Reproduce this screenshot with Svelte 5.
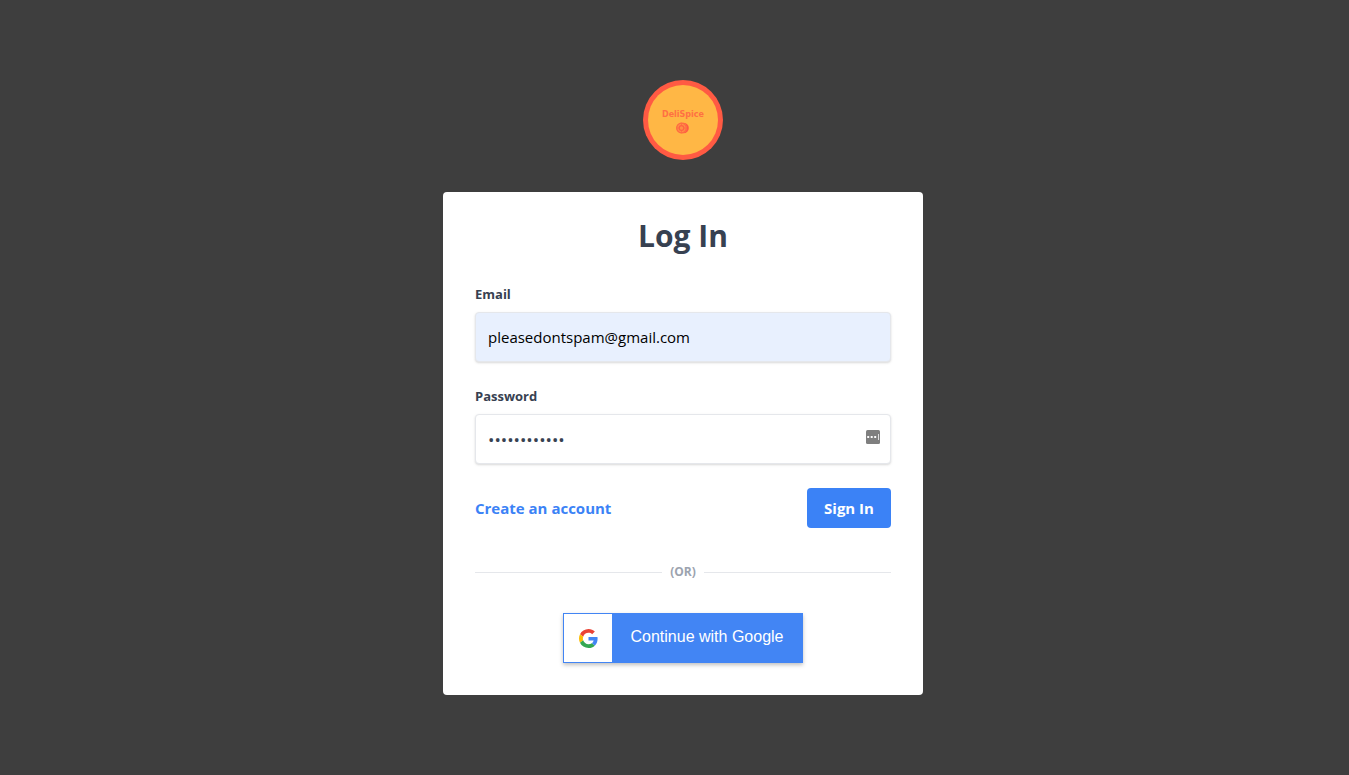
<script>
  let email = $state('pleasedontspam@gmail.com');
  let password = $state('spicymeals12');
  let visible = $state(false);
</script>

<main>
  <svg class="logo" viewBox="0 0 80 80" role="img" aria-label="DeliSpice">
    <circle cx="40" cy="40" r="40" fill="#ff5a43" />
    <circle cx="40" cy="40" r="35" fill="#ffb745" />
    <text x="40" y="37" text-anchor="middle">DeliSpice</text>
    <g transform="translate(39 48)">
      <circle cx="1.6" cy="0" r="5.2" fill="#ff5a43" />
      <circle cx="-0.5" cy="0" r="5.4" fill="#ff9044" />
      <circle cx="-0.5" cy="0" r="4.8" fill="none" stroke="#ff6a43" stroke-width="1.2" />
      <circle cx="-0.5" cy="0" r="2.3" fill="none" stroke="#ff6243" stroke-width="1.2" />
      <path d="M-0.5 -4.5V-2.5M-0.5 2.5V4.5M-4.8 0H-2.8M1.8 0H3.8" stroke="#ff6a43" stroke-width="0.8" />
    </g>
  </svg>

  <section class="card">
    <h1>Log In</h1>
    <form onsubmit={(e) => e.preventDefault()}>
      <div class="field">
        <label for="email">Email</label>
        <input id="email" class="filled" type="email" bind:value={email} />
      </div>
      <div class="field">
        <label for="password">Password</label>
        <div class="box">
          <input id="password" type={visible ? 'text' : 'password'} bind:value={password} />
          <button class="reveal" type="button" aria-label="Show password" onclick={() => (visible = !visible)}>
            <svg viewBox="0 0 14 14" width="14" height="14" aria-hidden="true">
              <rect width="14" height="14" rx="1.5" fill="#7f7f7f" />
              <rect x="1.2" y="6" width="2" height="2" rx="0.5" fill="#fff" />
              <rect x="4.7" y="6" width="2" height="2" rx="0.5" fill="#fff" />
              <rect x="8.2" y="6" width="2" height="2" rx="0.5" fill="#fff" />
              <rect x="12" y="4" width="1" height="6" fill="#ddd" />
            </svg>
          </button>
        </div>
      </div>
      <div class="actions">
        <a href="#register">Create an account</a>
        <button class="submit" type="submit">Sign In</button>
      </div>
    </form>

    <div class="divider"><span>(OR)</span></div>

    <button class="google" type="button">
      <span class="mark">
        <svg viewBox="0 0 48 48" width="19" height="19" aria-hidden="true">
          <path fill="#EA4335" d="M24 9.5c3.54 0 6.71 1.22 9.21 3.6l6.85-6.85C35.9 2.38 30.47 0 24 0 14.62 0 6.51 5.38 2.56 13.22l7.98 6.19C12.43 13.72 17.74 9.5 24 9.5z" />
          <path fill="#4285F4" d="M46.98 24.55c0-1.57-.15-3.09-.38-4.55H24v9.02h12.94c-.58 2.96-2.26 5.48-4.78 7.18l7.73 6c4.51-4.18 7.09-10.36 7.09-17.65z" />
          <path fill="#FBBC05" d="M10.53 28.59c-.48-1.45-.76-2.99-.76-4.59s.27-3.14.76-4.59l-7.98-6.19C.92 16.46 0 20.12 0 24c0 3.88.92 7.54 2.56 10.78l7.97-6.19z" />
          <path fill="#34A853" d="M24 48c6.48 0 11.93-2.13 15.89-5.81l-7.73-6c-2.15 1.45-4.92 2.3-8.16 2.3-6.26 0-11.57-4.22-13.47-9.91l-7.98 6.19C6.51 42.62 14.62 48 24 48z" />
        </svg>
      </span>
      <span class="caption">Continue with Google</span>
    </button>
  </section>
</main>

<style>
  :global(body) {
    margin: 0;
    background: #3e3e3e;
  }

  * {
    box-sizing: border-box;
  }

  main {
    display: flex;
    flex-direction: column;
    align-items: center;
    gap: 32px;
    padding: 80px 0 80px 17px;
    font-family: 'Open Sans', 'Noto Sans', sans-serif;
    font-size: 15px;
    line-height: 24px;
    color: #374151;
  }

  .logo {
    display: block;
    width: 80px;
    height: 80px;
  }

  .logo text {
    font: 700 8px 'DejaVu Sans', sans-serif;
    fill: #ff7043;
  }

  .card {
    width: 100%;
    max-width: 480px;
    padding: 24px 32px 32px;
    border-radius: 4px;
    background: #fff;
  }

  h1 {
    margin: 0 0 28px;
    font-size: 30px;
    font-weight: 700;
    line-height: 40px;
    text-align: center;
  }

  .field {
    margin-bottom: 24px;
  }

  label {
    display: block;
    margin-bottom: 8px;
    font-size: 13px;
    font-weight: 700;
    line-height: 20px;
  }

  input {
    display: block;
    width: 100%;
    height: 50px;
    padding: 0 12px;
    border: 1px solid #e5e7eb;
    border-radius: 4px;
    background: #fff;
    box-shadow: 0 1px 3px rgba(0, 0, 0, 0.1), 0 1px 2px rgba(0, 0, 0, 0.06);
    color: #374151;
    font: inherit;
  }

  .filled {
    background: #e8f0fe;
    color: #000;
  }

  .box {
    position: relative;
  }

  .box input {
    padding-right: 40px;
  }

  input[type='password'] {
    font-size: 17px;
  }

  .reveal {
    position: absolute;
    top: 16px;
    right: 11px;
    display: block;
    padding: 0;
    border: 0;
    background: none;
    line-height: 0;
    cursor: pointer;
  }

  .actions {
    display: flex;
    align-items: center;
    justify-content: space-between;
  }

  a {
    color: #3b82f6;
    font-weight: 700;
    text-decoration: none;
  }

  .submit {
    min-width: 84px;
    height: 40px;
    padding: 0 16px;
    border: 0;
    border-radius: 4px;
    background: #3b82f6;
    color: #fff;
    font: inherit;
    font-weight: 700;
    cursor: pointer;
  }

  .divider {
    display: flex;
    align-items: center;
    gap: 8px;
    margin: 36px 0 33px;
    color: #9ca3af;
    font-size: 12px;
    font-weight: 700;
    line-height: 16px;
  }

  .divider::before,
  .divider::after {
    content: '';
    flex: 1;
    height: 1px;
    background: #e5e7eb;
  }

  .google {
    display: flex;
    width: 240px;
    height: 50px;
    margin: 0 auto;
    padding: 1px;
    border: 0;
    background: #4285f4;
    box-shadow: 0 2px 4px rgba(0, 0, 0, 0.25);
    color: #fff;
    font-family: 'Liberation Sans', Arial, sans-serif;
    font-size: 16px;
    line-height: 46px;
    cursor: pointer;
  }

  .mark {
    display: flex;
    align-items: center;
    justify-content: center;
    width: 48px;
    height: 48px;
    background: #fff;
  }

  .caption {
    flex: 1;
    text-align: center;
  }
</style>
